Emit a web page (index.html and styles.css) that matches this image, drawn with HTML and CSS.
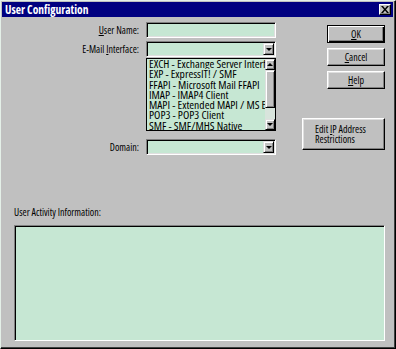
FILE: index.html
```html
<!DOCTYPE html>
<html>
<head>
<meta charset="utf-8">
<link rel="stylesheet" href="styles.css">
</head>
<body>
<div class="window">
  <div class="titlebar">
    <span class="title">User Configuration</span>
    <span class="close">
      <svg width="8" height="7" viewBox="0 0 8 7"><path d="M0 0h2l2 2.5L6 0h2L5 3.5 8 7H6L4 4.5 2 7H0l3-3.5z" fill="#000"/></svg>
    </span>
  </div>
  <div class="content">
    <div class="top">
      <div class="form">
        <label class="lbl"><u>U</u>ser Name:</label>
        <div class="field"></div>
        <label class="lbl">E-Mail <u>I</u>nterface:</label>
        <div class="combo">
          <div class="combo-value"></div>
          <div class="arrow-btn"><span class="tri"></span></div>
          <div class="dropdown">
            <ul class="items">
              <li>EXCH - Exchange Server Interface</li>
              <li>EXP - ExpressIT! / SMF</li>
              <li>FFAPI - Microsoft Mail FFAPI</li>
              <li>IMAP - IMAP4 Client</li>
              <li>MAPI - Extended MAPI / MS Exchange</li>
              <li>POP3 - POP3 Client</li>
              <li>SMF - SMF/MHS Native</li>
            </ul>
            <div class="scrollbar">
              <div class="sb-btn"><span class="tri up"></span></div>
              <div class="thumb"></div>
              <div class="track"></div>
              <div class="sb-btn"><span class="tri"></span></div>
            </div>
          </div>
        </div>
        <label class="lbl spaced">Domain:</label>
        <div class="combo spaced">
          <div class="combo-value"></div>
          <div class="arrow-btn"><span class="tri"></span></div>
        </div>
      </div>
      <div class="buttons">
        <button class="btn default"><u>O</u>K</button>
        <button class="btn"><u>C</u>ancel</button>
        <button class="btn"><u>H</u>elp</button>
        <button class="btn wide">Edit <u>I</u>P Address<br>Restrictions</button>
      </div>
    </div>
    <div class="activity-label">User Activity Information:</div>
    <div class="activity"></div>
  </div>
</div>
</body>
</html>
```
FILE: styles.css
```css
html, body {
  margin: 0;
  padding: 0;
}
body {
  background: #c0c0c0;
  font-family: "Open Sans", "Liberation Sans", Arial, sans-serif;
  font-stretch: 75%;
  font-size: 10px;
  color: #000;
}
.window {
  width: 396px;
  height: 349px;
  box-sizing: border-box;
  background: #c0c0c0;
  border: 1px solid;
  border-color: #e4f0e8 #000 #000 #e4f0e8;
  box-shadow: inset -1px -1px #404040;
  padding: 1px 2px 2px 1px;
  display: flex;
  flex-direction: column;
}
.titlebar {
  height: 15px;
  flex: none;
  background: #000080;
  color: #fff;
  display: flex;
  align-items: center;
  justify-content: space-between;
  padding: 0 2px 0 3px;
}
.title {
  font-weight: bold;
  font-size: 11.5px;
  font-stretch: 87.5%;
  line-height: 15px;
}
.close {
  width: 12px;
  height: 11px;
  box-sizing: border-box;
  background: #c0c0c0;
  border: 1px solid;
  border-color: #fff #000 #000 #fff;
  box-shadow: inset -1px -1px #808080;
  display: flex;
  align-items: center;
  justify-content: center;
}
.close svg { display: block; }
.content {
  flex: 1;
  display: flex;
  flex-direction: column;
  padding: 5px 8px 5px 12px;
  min-height: 0;
}
.top {
  display: flex;
  justify-content: space-between;
  align-items: flex-start;
}
.form {
  display: grid;
  grid-template-columns: 125px 130px;
  column-gap: 7px;
  row-gap: 3px;
  align-items: center;
}
.lbl {
  text-align: right;
  line-height: 12px;
  white-space: nowrap;
}
.spaced { margin-top: 79px; }
.field, .combo {
  height: 16px;
  box-sizing: border-box;
  background: #c6e7d3;
  border: 1px solid;
  border-color: #808080 #fff #fff #808080;
  box-shadow: inset 1px 1px #000, inset -1px -1px #dfdfdf;
}
.combo {
  position: relative;
  display: flex;
  padding: 1px 1px 1px 1px;
}
.combo-value { flex: 1; }
.arrow-btn, .sb-btn {
  width: 11px;
  box-sizing: border-box;
  background: #c0c0c0;
  border: 1px solid;
  border-color: #dfdfdf #000 #000 #dfdfdf;
  box-shadow: inset 1px 1px #fff, inset -1px -1px #808080;
  display: flex;
  align-items: center;
  justify-content: center;
}
.tri {
  width: 0;
  height: 0;
  border-left: 3px solid transparent;
  border-right: 3px solid transparent;
  border-top: 3px solid #000;
}
.tri.up {
  border-top: 0;
  border-bottom: 3px solid #000;
}
.dropdown {
  position: absolute;
  left: -1px;
  top: 16px;
  width: 130px;
  height: 73px;
  box-sizing: border-box;
  border: 1px solid #000;
  background: #c6e7d3;
  display: flex;
  z-index: 2;
}
.items {
  flex: 1;
  list-style: none;
  margin: 0;
  padding: 0 0 0 2px;
  overflow: hidden;
  white-space: nowrap;
  font-size: 11.6px;
  line-height: 10.3px;
}
.items li { overflow: hidden; }
.scrollbar {
  width: 10px;
  display: flex;
  flex-direction: column;
  background: #d8e4dc;
}
.scrollbar .sb-btn {
  width: 10px;
  height: 11px;
}
.thumb {
  height: 38px;
  box-sizing: border-box;
  background: #c0c0c0;
  border: 1px solid;
  border-color: #dfdfdf #000 #000 #dfdfdf;
  box-shadow: inset 1px 1px #fff, inset -1px -1px #808080;
}
.track { flex: 1; }
.buttons {
  display: flex;
  flex-direction: column;
  align-items: flex-end;
  gap: 5px;
  padding-top: 3px;
}
.btn {
  width: 58px;
  height: 18px;
  box-sizing: border-box;
  margin: 0;
  padding: 0;
  font: inherit;
  color: #000;
  background: #c0c0c0;
  border: 1px solid;
  border-color: #fff #000 #000 #fff;
  box-shadow: inset -1px -1px #808080, inset 1px 1px #dfdfdf;
  line-height: 12px;
}
.btn.default {
  border: 1px solid #000;
  box-shadow: inset 1px 1px #fff, inset -1px -1px #000, inset -2px -2px #808080;
}
.btn.wide {
  width: 83px;
  height: 32px;
  margin-top: 24px;
  text-align: left;
  padding-left: 12px;
  line-height: 10px;
}
.activity-label {
  margin-top: 51px;
  line-height: 12px;
}
.activity {
  flex: 1;
  margin-top: 7px;
  background: #c6e7d3;
  border: 1px solid;
  border-color: #808080 #fff #fff #808080;
  box-shadow: inset 1px 1px #000;
}
```
